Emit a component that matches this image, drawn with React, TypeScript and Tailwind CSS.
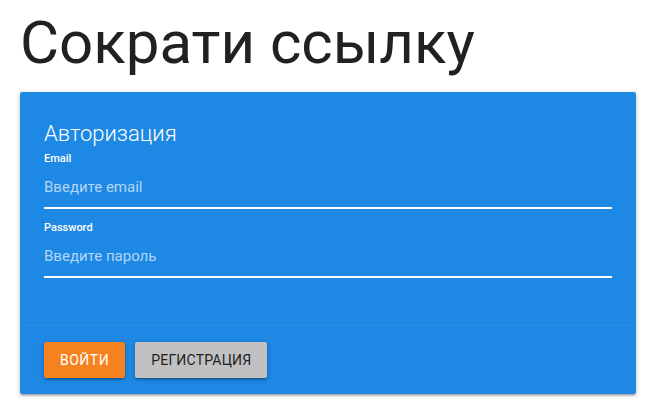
export default function App() {
  return (
    <div className="min-h-screen bg-white px-5 pt-2 font-['Roboto',sans-serif]">
      {/* Заголовок */}
      <h1 className="mb-[14px] text-[60px] leading-[70px] font-normal text-[#212121]">
        Сократи ссылку
      </h1>

      {/* Карточка авторизации */}
      <div className="w-[616px] rounded-[2px] bg-[#1e88e5] text-white shadow-[0_2px_2px_0_rgba(0,0,0,0.14),0_3px_1px_-2px_rgba(0,0,0,0.12),0_1px_5px_0_rgba(0,0,0,0.2)]">
        <div className="px-6 pt-6 pb-[47px]">
          <p className="text-[22px] leading-[35px] font-light">Авторизация</p>

          <label className="mt-px block text-[11px] leading-[14px] font-medium">
            Email
          </label>
          <input
            type="email"
            placeholder="Введите email"
            className="block h-[43px] w-full border-b-2 border-white bg-transparent text-[15px] text-white outline-none placeholder:text-[#b3d6f6]"
          />

          <label className="mt-3 block text-[11px] leading-[14px] font-medium">
            Password
          </label>
          <input
            type="password"
            placeholder="Введите пароль"
            className="block h-[43px] w-full border-b-2 border-white bg-transparent text-[15px] text-white outline-none placeholder:text-[#b3d6f6]"
          />
        </div>

        <div className="flex gap-[10px] border-t border-[rgba(160,160,160,0.2)] px-6 py-4">
          <button className="h-9 rounded-[2px] bg-[#f5821f] px-4 text-[14px] tracking-[0.5px] text-white uppercase shadow-[0_2px_2px_0_rgba(0,0,0,0.14),0_3px_1px_-2px_rgba(0,0,0,0.12),0_1px_5px_0_rgba(0,0,0,0.2)]">
            Войти
          </button>
          <button className="h-9 rounded-[2px] bg-[#c1c1c1] px-4 text-[14px] tracking-[0.2px] text-[#1f1f1f] uppercase shadow-[0_2px_2px_0_rgba(0,0,0,0.14),0_3px_1px_-2px_rgba(0,0,0,0.12),0_1px_5px_0_rgba(0,0,0,0.2)]">
            Регистрация
          </button>
        </div>
      </div>
    </div>
  );
}
